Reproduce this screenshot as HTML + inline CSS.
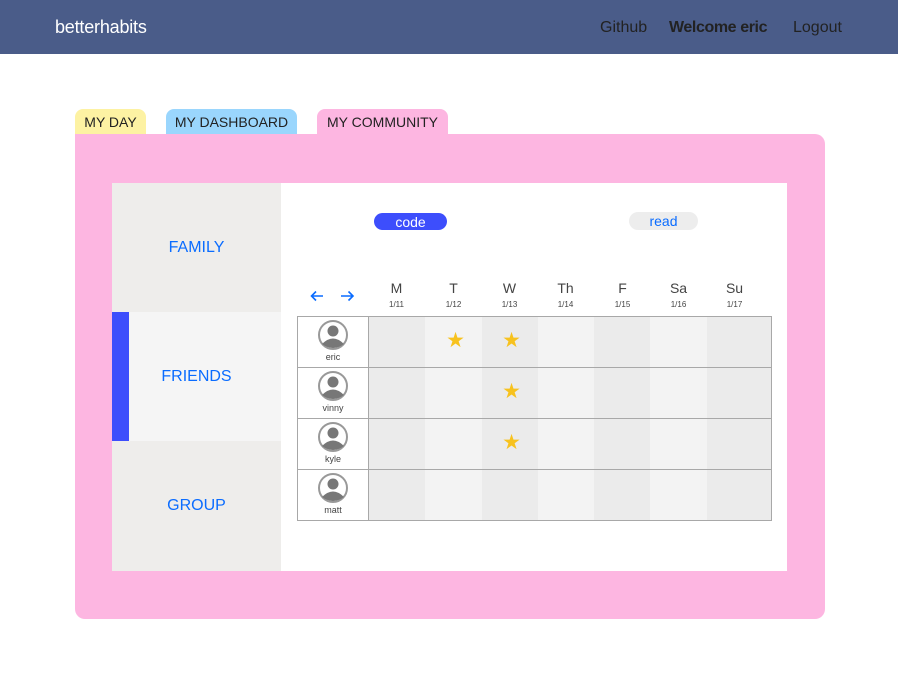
<!DOCTYPE html>
<html><head><style>
body{margin:0;width:898px;height:686px;background:#fff;font-family:"Liberation Sans",sans-serif;position:relative;overflow:hidden}
.a{position:absolute}
.nav{left:0;top:0;width:898px;height:54px;background:#4a5c89}
.tab{height:26px;border-radius:8px 8px 0 0;font-size:14px;color:#222;line-height:27px;text-align:center}
.side{left:112px;width:169px;height:129px;background:#eeedeb;color:#0a6cff;font-size:16px;text-align:center;line-height:129px}
.hd{text-align:center;color:#444;font-size:14px;width:57px}
.hd small{display:block;font-size:8px;margin-top:4px;color:#444}
.e{background:#ebebeb}.o{background:#f3f3f3}
.star{color:#f7c21e;font-size:21px;text-align:center;width:57px}
.nm{left:298px;width:70px;text-align:center;font-size:9px;color:#444}
</style></head><body>
<div class="a nav"></div>
<div class="a" style="left:55px;top:17px;color:#fff;font-size:18px;letter-spacing:-0.2px">betterhabits</div>
<div class="a" style="left:600px;top:19px;color:#222;font-size:16px">Github</div>
<div class="a" style="left:669px;top:19px;color:#222;font-size:16px;font-weight:bold;letter-spacing:-0.4px">Welcome eric</div>
<div class="a" style="left:793px;top:19px;color:#222;font-size:16px">Logout</div>

<div class="a tab" style="left:75px;top:109px;width:71px;background:#fdf2a3">MY DAY</div>
<div class="a tab" style="left:166px;top:109px;width:131px;background:#9ad6fd">MY DASHBOARD</div>
<div class="a tab" style="left:317px;top:109px;width:131px;background:#fdb6e1">MY COMMUNITY</div>
<div class="a" style="left:75px;top:134px;width:750px;height:485px;background:#fdb6e1;border-radius:0 10px 10px 10px"></div>
<div class="a" style="left:112px;top:183px;width:675px;height:388px;background:#fff"></div>
<div class="a side" style="top:183px">FAMILY</div>
<div class="a side" style="top:312px;background:#f5f5f5">FRIENDS</div>
<div class="a" style="left:112px;top:312px;width:17px;height:129px;background:#3d4efc"></div>
<div class="a side" style="top:441px;height:130px">GROUP</div>

<div class="a" style="left:374px;top:213px;width:73px;height:17px;border-radius:9px;background:#3d4efc;color:#fff;font-size:14px;text-align:center;line-height:18px">code</div>
<div class="a" style="left:629px;top:212px;width:69px;height:18px;border-radius:9px;background:#ededed;color:#0a6cff;font-size:14px;text-align:center;line-height:19px">read</div>

<svg class="a" style="left:310px;top:290px" width="45" height="12" viewBox="0 0 45 12"><path d="M13 6H2M6 1.5L1.5 6 6 10.5" fill="none" stroke="#0a6cff" stroke-width="1.6"/><path d="M31 6H43M38.5 1.5L43 6 38.5 10.5" fill="none" stroke="#0a6cff" stroke-width="1.6"/></svg>

<div class="a hd" style="left:368px;top:280px">M<small>1/11</small></div>
<div class="a hd" style="left:425px;top:280px">T<small>1/12</small></div>
<div class="a hd" style="left:481px;top:280px">W<small>1/13</small></div>
<div class="a hd" style="left:537px;top:280px">Th<small>1/14</small></div>
<div class="a hd" style="left:594px;top:280px">F<small>1/15</small></div>
<div class="a hd" style="left:650px;top:280px">Sa<small>1/16</small></div>
<div class="a hd" style="left:706px;top:280px">Su<small>1/17</small></div>

<div class="a e" style="left:369px;top:316px;width:56px;height:204px"></div>
<div class="a o" style="left:425px;top:316px;width:57px;height:204px"></div>
<div class="a e" style="left:482px;top:316px;width:56px;height:204px"></div>
<div class="a o" style="left:538px;top:316px;width:56px;height:204px"></div>
<div class="a e" style="left:594px;top:316px;width:56px;height:204px"></div>
<div class="a o" style="left:650px;top:316px;width:57px;height:204px"></div>
<div class="a e" style="left:707px;top:316px;width:65px;height:204px"></div>
<div class="a" style="left:297px;top:316px;width:473px;height:203px;border:1px solid #a8a8a8"></div>
<div class="a" style="left:368px;top:316px;width:1px;height:205px;background:#a8a8a8"></div>
<div class="a" style="left:297px;top:367px;width:475px;height:1px;background:#a8a8a8"></div>
<div class="a" style="left:297px;top:418px;width:475px;height:1px;background:#a8a8a8"></div>
<div class="a" style="left:297px;top:469px;width:475px;height:1px;background:#a8a8a8"></div>

<svg width="0" height="0" style="position:absolute"><defs><symbol id="av" viewBox="0 0 34 30"><circle cx="17" cy="15" r="14" fill="#fff" stroke="#999" stroke-width="2"/><circle cx="17" cy="11" r="5.5" fill="#777"/><path d="M6 24 Q17 13 28 24 Q17 32 6 24Z" fill="#777"/></symbol></defs></svg>
<svg class="a" style="left:316px;top:320px" width="34" height="30"><use href="#av"/></svg>
<svg class="a" style="left:316px;top:371px" width="34" height="30"><use href="#av"/></svg>
<svg class="a" style="left:316px;top:422px" width="34" height="30"><use href="#av"/></svg>
<svg class="a" style="left:316px;top:473px" width="34" height="30"><use href="#av"/></svg>
<div class="a nm" style="top:352px">eric</div>
<div class="a nm" style="top:403px">vinny</div>
<div class="a nm" style="top:454px">kyle</div>
<div class="a nm" style="top:505px">matt</div>

<div class="a star" style="left:427px;top:328px">★</div>
<div class="a star" style="left:483px;top:328px">★</div>
<div class="a star" style="left:483px;top:379px">★</div>
<div class="a star" style="left:483px;top:430px">★</div>
</body></html>
